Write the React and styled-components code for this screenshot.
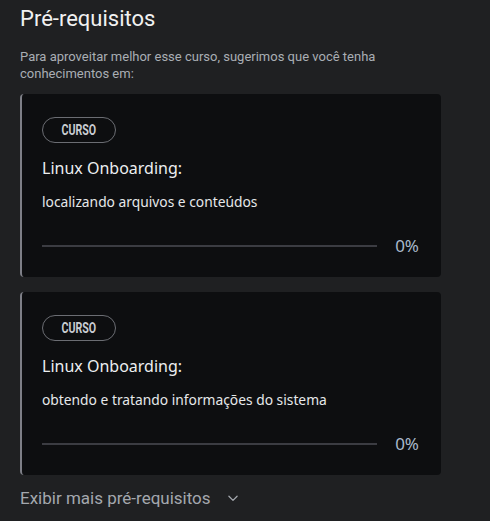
import React from 'react';
import styled, { createGlobalStyle } from 'styled-components';

const GlobalStyle = createGlobalStyle`
  html, body {
    margin: 0;
    padding: 0;
    background-color: #1f2022;
  }
  * {
    box-sizing: border-box;
  }
`;

const Section = styled.section`
  font-family: Roboto, "Liberation Sans", sans-serif;
  width: 441px;
  padding: 5px 0 0 20px;
`;

const Title = styled.h2`
  margin: 0;
  font-size: 22px;
  font-weight: 400;
  line-height: 28px;
  color: #f1f1f1;
`;

const Intro = styled.p`
  margin: 15px 0 12px;
  font-size: 13px;
  line-height: 17px;
  color: #a9aeb4;
`;

const List = styled.div`
  display: flex;
  flex-direction: column;
  gap: 15px;
`;

const Card = styled.article`
  background-color: #0d0e10;
  border-left: 2px solid #7e7f87;
  border-radius: 4px;
  padding: 23px 22px 19px 20px;
`;

const Badge = styled.span`
  display: inline-flex;
  align-items: center;
  justify-content: center;
  width: 74px;
  height: 26px;
  border: 1px solid #6b6d73;
  border-radius: 13px;
`;

const BadgeText = styled.span`
  display: inline-block;
  font-family: Roboto, "Liberation Sans", sans-serif;
  font-weight: 700;
  font-size: 14px;
  line-height: 14px;
  color: #c9cdd2;
  transform: scaleX(0.76);
`;

const CourseName = styled.h3`
  margin: 13px 0 0;
  font-family: "Noto Sans", sans-serif;
  font-size: 16px;
  font-weight: 400;
  line-height: 24px;
  color: #eceef0;
`;

const CourseTopic = styled.p`
  margin: 12px 0 0;
  font-family: "Noto Sans", sans-serif;
  font-size: 13.8px;
  line-height: 20px;
  color: #e6e8ea;
`;

const ProgressRow = styled.div`
  display: flex;
  align-items: center;
  gap: 18px;
  margin-top: 22px;
`;

const Track = styled.div`
  flex: 1;
  height: 2px;
  background-color: #3b3c42;
`;

const Fill = styled.div`
  height: 100%;
  background-color: #7ab0ff;
`;

const Percent = styled.span`
  font-family: "Noto Sans", sans-serif;
  font-size: 17px;
  line-height: 24px;
  color: #a9b9cb;
`;

const MoreButton = styled.button`
  display: flex;
  align-items: center;
  gap: 15px;
  margin-top: 12px;
  padding: 0;
  background: none;
  border: none;
  font-family: Roboto, "Liberation Sans", sans-serif;
  font-size: 17px;
  line-height: 22px;
  color: #a4a8ae;
  cursor: pointer;
`;

const courses = [
  { name: 'Linux Onboarding:', topic: 'localizando arquivos e conteúdos', progress: 0 },
  { name: 'Linux Onboarding:', topic: 'obtendo e tratando informações do sistema', progress: 0 },
];

const Chevron = () => (
  <svg width="14" height="14" viewBox="0 0 24 24" fill="none" stroke="#a4a8ae" strokeWidth="2.2" strokeLinecap="round" strokeLinejoin="round">
    <path d="M5 9l7 7 7-7" />
  </svg>
);

const App = () => {
  return (
    <>
      <GlobalStyle />
      <Section>
        <Title>Pré-requisitos</Title>
        <Intro>Para aproveitar melhor esse curso, sugerimos que você tenha conhecimentos em:</Intro>
        <List>
          {courses.map((course, i) => (
            <Card key={i}>
              <Badge>
                <BadgeText>CURSO</BadgeText>
              </Badge>
              <CourseName>{course.name}</CourseName>
              <CourseTopic>{course.topic}</CourseTopic>
              <ProgressRow>
                <Track>
                  <Fill style={{ width: course.progress + '%' }} />
                </Track>
                <Percent>{course.progress}%</Percent>
              </ProgressRow>
            </Card>
          ))}
        </List>
        <MoreButton>
          Exibir mais pré-requisitos
          <Chevron />
        </MoreButton>
      </Section>
    </>
  );
};

export default App;
